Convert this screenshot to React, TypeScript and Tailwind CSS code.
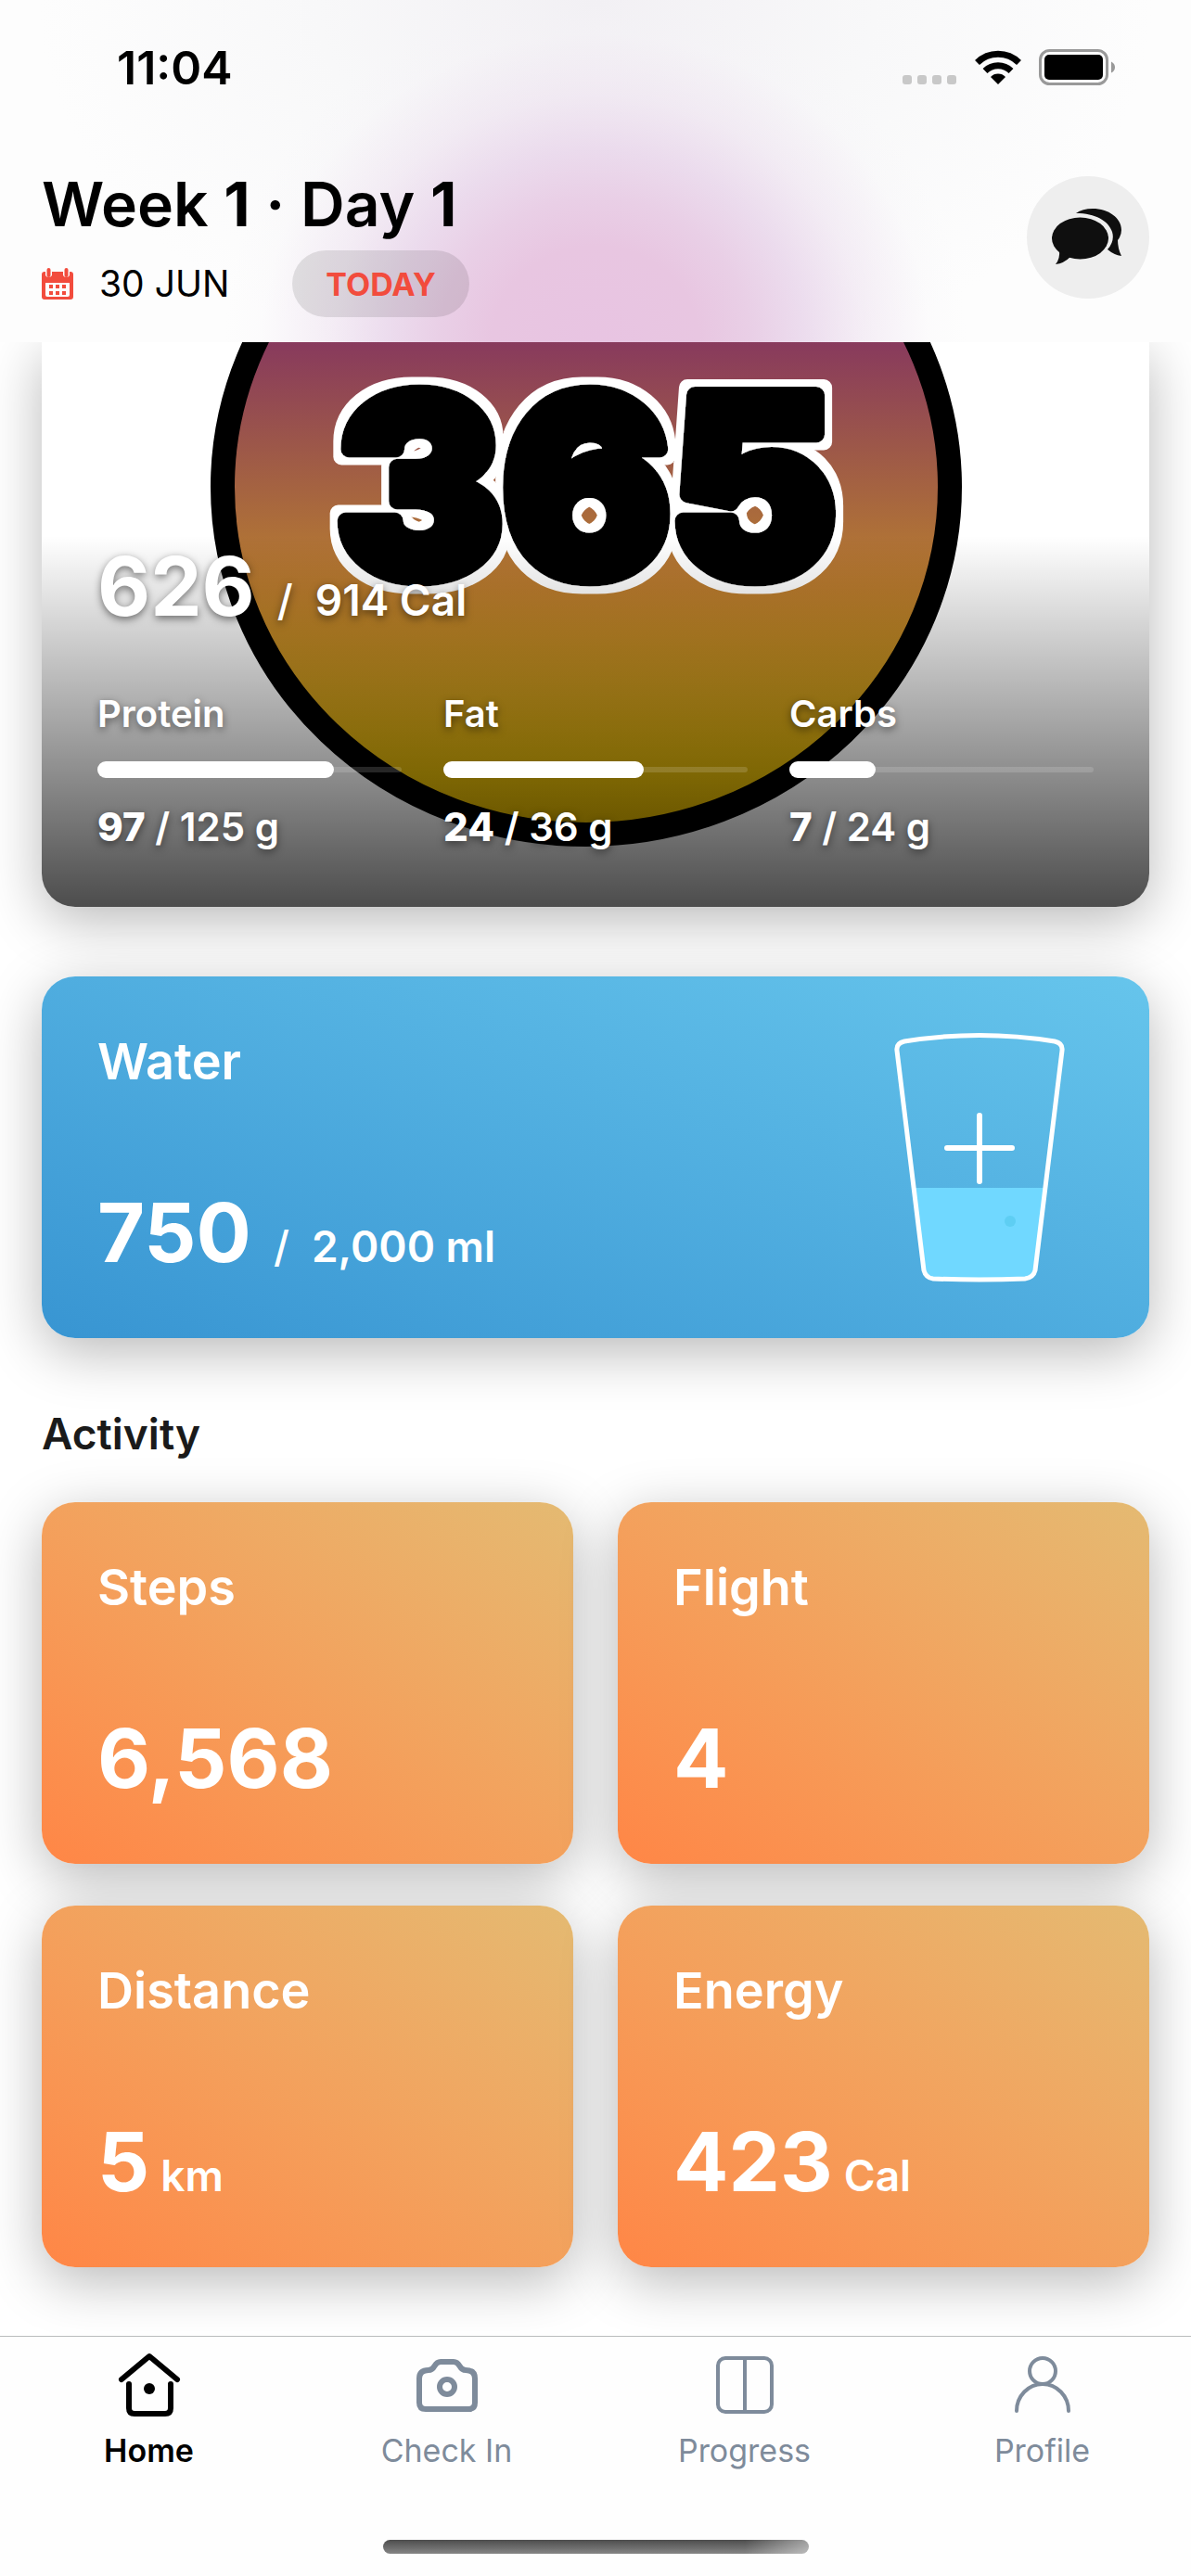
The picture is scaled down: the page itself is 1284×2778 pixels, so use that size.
interface Macro {
    label: string;
    value: number;
    target: number;
    percent: number;
}

interface Activity {
    label: string;
    value: string;
    unit?: string;
}

const macros: Macro[] = [
    { label: 'Protein', value: 97, target: 125, percent: 77.6 },
    { label: 'Fat', value: 24, target: 36, percent: 66 },
    { label: 'Carbs', value: 7, target: 24, percent: 28.5 },
];

const activities: Activity[] = [
    { label: 'Steps', value: '6,568' },
    { label: 'Flight', value: '4' },
    { label: 'Distance', value: '5', unit: 'km' },
    { label: 'Energy', value: '423', unit: 'Cal' },
];

const cardShadow = 'shadow-[0_15px_60px_rgba(0,0,0,0.28)]';

function StatusBar() {
    return (
        <div className="flex items-center justify-between pr-20 pl-[126px] pt-[43px]">
            <span className="text-[50px] leading-[60px] font-semibold">11:04</span>
            <div className="flex items-center gap-[18px]">
                <svg width="60" height="40" viewBox="0 0 60 40" fill="#c8c8c8">
                    {[0, 16, 32, 48].map(x => (
                        <rect key={x} x={x + 1} y="28" width="10" height="10" rx="3" />
                    ))}
                </svg>
                <svg width="52" height="40" viewBox="0 0 52 40" fill="none" stroke="#000">
                    <path d="M3.5 14.5a32 32 0 0 1 45 0" strokeWidth="7" />
                    <path d="M12 23.5a20 20 0 0 1 28 0" strokeWidth="7" />
                    <path d="M26 38l-8-8a11 11 0 0 1 16 0z" fill="#000" stroke="none" />
                </svg>
                <svg width="84" height="40" viewBox="0 0 84 40">
                    <rect x="1.5" y="1.5" width="72" height="36" rx="10" fill="none" stroke="#999" strokeWidth="3" />
                    <rect x="6" y="6" width="63" height="27" rx="5" fill="#000" />
                    <path d="M78 13.5q4 2 4 6t-4 6z" fill="#999" />
                </svg>
            </div>
        </div>
    );
}

function CalendarIcon() {
    return (
        <svg width="34" height="34" viewBox="0 0 34 34" fill="#f24c3d">
            <path fillRule="evenodd" d="M3 4h1v4a4 4 0 0 0 7 0V4h12v4a4 4 0 0 0 7 0V4h1a3 3 0 0 1 3 3v24a3 3 0 0 1-3 3H3a3 3 0 0 1-3-3V7a3 3 0 0 1 3-3zM4 16v13q0 2 2 2h22q2 0 2-2V16z" />
            <rect x="5.5" y="0" width="4" height="10" rx="2" />
            <rect x="24.5" y="0" width="4" height="10" rx="2" />
            {[8, 15, 22].map(x => (
                <g key={x}>
                    <rect x={x} y="18" width="4" height="4" />
                    <rect x={x} y="25" width="4" height="4" />
                </g>
            ))}
        </svg>
    );
}

function ChatIcon() {
    return (
        <svg width="78" height="62" viewBox="34 45 78 62" fill="currentColor">
            <ellipse cx="64.5" cy="77" rx="30.5" ry="22.5" />
            <path d="M42 90q1 9-4 15 9-1 16-8z" />
            <path d="M60 50q7-5 18-5c17 0 31 10 31 23q0 6-4 11 0 9 4 17-8-1-15-7 8-9 5-19c-4-12-18-20-39-20z" />
        </svg>
    );
}

function Header() {
    return (
        <header className="relative z-10 bg-[#fdfdfd] bg-[radial-gradient(ellipse_400px_370px_at_50%_100%,#e8c4e2_0%,#e8c6e1_28%,#e9cfe6_42%,rgba(232,212,234,0.8)_56%,rgba(236,222,238,0.5)_72%,rgba(244,240,246,0.15)_90%,rgba(244,240,246,0)_100%),radial-gradient(ellipse_600px_420px_at_50%_0%,#f2f0f4_0%,#f8f8f9_50%,#fdfdfd_100%)] pb-[27px]">
            <StatusBar />
            <div className="flex items-start justify-between px-[45px] pt-[79px]">
                <div>
                    <h1 className="text-[66px] leading-[76px] font-semibold">
                        Week <span className="font-bold">1</span> · Day <span className="font-bold">1</span>
                    </h1>
                    <div className="mt-3 flex items-center">
                        <CalendarIcon />
                        <span className="ml-7 text-[39px] leading-[72px]">30 JUN</span>
                        <button type="button" className="ml-[68px] h-[72px] rounded-full bg-black/10 px-9 text-[34px] font-bold text-[#f24c3d]">
                            TODAY
                        </button>
                    </div>
                </div>
                <button type="button" aria-label="Messages" className="mt-2 flex size-[132px] items-center justify-center rounded-full bg-[#eeeeee] text-[#0f0f0f]">
                    <ChatIcon />
                </button>
            </div>
        </header>
    );
}

function LogoArt() {
    return (
        <svg className="absolute inset-0 size-full" viewBox="0 0 1194 609" preserveAspectRatio="xMidYMid slice">
            <defs>
                <linearGradient id="sunset" x1="0" y1="0" x2="0" y2="519" gradientUnits="userSpaceOnUse">
                    <stop offset="0" stopColor="#883a5d" />
                    <stop offset="0.4" stopColor="#ae7038" />
                    <stop offset="0.52" stopColor="#bc7d2d" />
                    <stop offset="0.73" stopColor="#d29f1e" />
                    <stop offset="0.9" stopColor="#e5bb07" />
                    <stop offset="1" stopColor="#ecbf00" />
                </linearGradient>
                <filter id="outline" x="-10%" y="-10%" width="120%" height="120%">
                    <feMorphology in="SourceAlpha" operator="dilate" radius="8" result="wide" />
                    <feFlood floodColor="#fff" />
                    <feComposite in2="wide" operator="in" result="edge" />
                    <feMerge>
                        <feMergeNode in="edge" />
                        <feMergeNode in="SourceGraphic" />
                    </feMerge>
                </filter>
            </defs>
            <ellipse cx="587" cy="156" rx="392" ry="375" fill="url(#sunset)" stroke="#000" strokeWidth="26" />
            <text
                x="587"
                y="252"
                fill="#000"
                stroke="#000"
                strokeWidth="18"
                strokeLinejoin="round"
                textAnchor="middle"
                filter="url(#outline)"
                className="font-[Inter,sans-serif] text-[268px] font-black"
            >
                365
            </text>
        </svg>
    );
}

function MacroBar({ label, value, target, percent }: Macro) {
    return (
        <div className="flex-1">
            <div className="text-[40px] leading-[48px] font-semibold">{label}</div>
            <div className="mt-[27px] flex h-[18px] items-center rounded-full" role="progressbar" aria-label={label} aria-valuenow={value} aria-valuemax={target}>
                <div className="h-[18px] rounded-full bg-white" style={{ width: `${percent}%` }} />
                <div className="h-[6px] flex-1 rounded-r-full bg-white/15" />
            </div>
            <div className="mt-7 text-[42px] leading-[50px] font-semibold">
                <span className="font-extrabold">{value}</span> / {target} g
            </div>
        </div>
    );
}

function NutritionCard() {
    return (
        <section className={`relative overflow-hidden rounded-b-[36px] bg-white ${cardShadow}`}>
            <LogoArt />
            <div className="absolute inset-x-0 bottom-0 h-[400px] bg-linear-to-b from-black/0 to-black/70" />
            <div className="relative px-[60px] pt-[208px] pb-[61px] text-white [text-shadow:0_3px_8px_rgba(0,0,0,0.5)]">
                <div className="flex h-[124px] items-baseline leading-[110px]">
                    <span className="text-[88px] font-bold">626</span>
                    <span className="ml-6 text-[46px] font-medium">/</span>
                    <span className="ml-6 text-[46px] font-semibold">914 Cal</span>
                </div>
                <div className="mt-[45px] flex gap-[45px]">
                    {macros.map(m => <MacroBar key={m.label} {...m} />)}
                </div>
            </div>
        </section>
    );
}

function WaterGlass() {
    return (
        <svg width="186" height="270" viewBox="0 0 186 270" fill="none">
            <path d="M24 168H162L152 256Q151 265 142 265L94 267 42 265Q33 264 32 256z" fill="#70d8ff" />
            <circle cx="126" cy="204" r="6" fill="#5ecef3" />
            <path d="M12 10Q93 -3 174 10Q183 12 182 20L153 257Q151 265 142 266Q93 268 43 266Q35 265 33 257L4 20Q3 12 12 10z" stroke="#fff" strokeWidth="5" strokeLinejoin="round" />
            <path d="M93 90V161M58 125H128" stroke="#fff" strokeWidth="6" strokeLinecap="round" />
        </svg>
    );
}

function WaterCard() {
    return (
        <section className={`mt-[75px] flex h-[390px] justify-between rounded-[36px] bg-linear-to-tr from-[#3895d2] to-[#66c5ec] pt-[60px] pr-[90px] pl-[60px] text-white ${cardShadow}`}>
            <div>
                <h2 className="text-[54px] leading-[64px] font-semibold">Water</h2>
                <div className="mt-[97px] flex items-baseline leading-[110px]">
                    <span className="text-[88px] font-bold">750</span>
                    <span className="ml-6 text-[46px] font-medium">/</span>
                    <span className="ml-6 text-[46px] font-semibold">2,000 ml</span>
                </div>
            </div>
            <button type="button" aria-label="Add water" className="self-start">
                <WaterGlass />
            </button>
        </section>
    );
}

function ActivityCard({ label, value, unit }: Activity) {
    return (
        <section className={`h-[390px] rounded-[36px] bg-linear-to-tr from-[#ff8646] to-[#e4ba72] px-[60px] pt-[60px] text-white ${cardShadow}`}>
            <h3 className="text-[54px] leading-[64px] font-semibold">{label}</h3>
            <div className="mt-[97px] flex items-baseline gap-3 leading-[110px]">
                <span className="text-[88px] font-bold">{value}</span>
                {unit && <span className="text-[46px] font-semibold">{unit}</span>}
            </div>
        </section>
    );
}

function HomeIcon() {
    return (
        <svg width="72" height="72" viewBox="0 0 72 72" fill="none" stroke="currentColor" strokeWidth="6" strokeLinecap="round" strokeLinejoin="round">
            <path d="M6 31L36 6l30 25" />
            <path d="M14 36v26q0 6 6 6h33q6 0 6-6V36" />
            <circle cx="36" cy="41" r="6" fill="currentColor" stroke="none" />
        </svg>
    );
}

function CameraIcon() {
    return (
        <svg width="72" height="72" viewBox="0 0 72 72" fill="none" stroke="currentColor" strokeWidth="6" strokeLinejoin="round">
            <path d="M29 12h14c8 0 5 9 13 9q10 0 10 9v26q0 7-7 7H13q-7 0-7-7V30q0-9 10-9c8 0 5-9 13-9z" />
            <circle cx="36" cy="39" r="8" />
        </svg>
    );
}

function ProgressIcon() {
    return (
        <svg width="72" height="72" viewBox="0 0 72 72" fill="none" stroke="currentColor" strokeWidth="4">
            <rect x="7" y="8" width="58" height="58" rx="8" />
            <path d="M36 8v58" />
        </svg>
    );
}

function ProfileIcon() {
    return (
        <svg width="72" height="72" viewBox="0 0 72 72" fill="none" stroke="currentColor" strokeWidth="4" strokeLinecap="round">
            <circle cx="36" cy="22" r="14" />
            <path d="M8 65a28 29 0 0 1 56 0" />
        </svg>
    );
}

const tabs = [
    { label: 'Home', icon: HomeIcon, active: true },
    { label: 'Check In', icon: CameraIcon, active: false },
    { label: 'Progress', icon: ProgressIcon, active: false },
    { label: 'Profile', icon: ProfileIcon, active: false },
];

function TabBar() {
    return (
        <footer className="relative z-10 mt-auto border-t border-[#b9bcbc] bg-[#fefefe] pb-6">
            <nav className="grid grid-cols-4 pt-[15px]">
                {tabs.map(({ label, icon: Icon, active }) => (
                    <a
                        key={label}
                        href="#"
                        className={`flex flex-col items-center gap-3 text-[34px] leading-[48px] ${
                            active ? 'font-semibold text-black' : 'text-[#7e8b9b]'
                        }`}
                    >
                        <Icon />
                        {label}
                    </a>
                ))}
            </nav>
            <div className="mx-auto mt-[72px] h-[15px] w-[459px] rounded-full bg-[linear-gradient(to_right,rgba(255,255,255,0)_85%,rgba(255,255,255,0.45)_100%),linear-gradient(#4d4d4d,#858585)]" />
        </footer>
    );
}

export default function App() {
    return (
        <div className="flex min-h-screen flex-col overflow-hidden bg-white font-[Inter,sans-serif] text-black">
            <Header />
            <main className="px-[45px] pb-[73px]">
                <NutritionCard />
                <WaterCard />
                <h2 className="mt-[75px] text-[46px] leading-[56px] font-semibold text-[#1a1a1a]">Activity</h2>
                <div className="mt-[46px] grid grid-cols-2 gap-x-12 gap-y-[45px]">
                    {activities.map(a => <ActivityCard key={a.label} {...a} />)}
                </div>
            </main>
            <TabBar />
        </div>
    );
}
